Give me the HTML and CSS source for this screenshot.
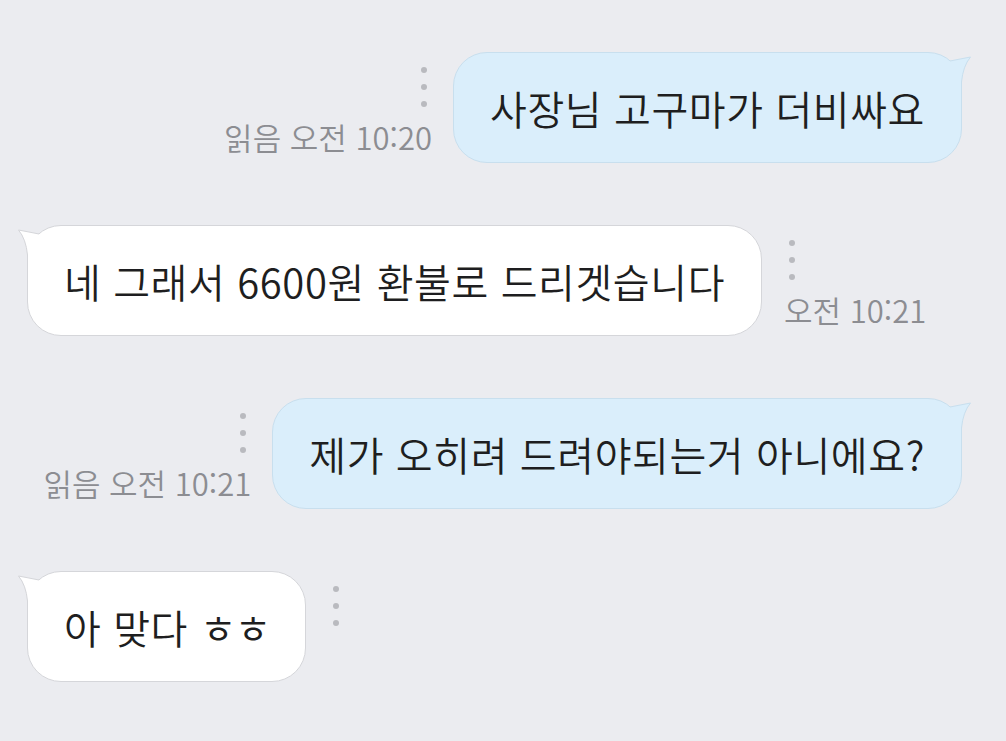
FILE: index.html
```html
<!DOCTYPE html>
<html lang="ko">
<head>
<meta charset="utf-8">
<link rel="stylesheet" href="styles.css">
</head>
<body>
<div class="chat">
  <div class="row row-me">
    <div class="meta">
      <div class="dots"><span></span><span></span><span></span></div>
      <div class="time">읽음 오전 10:20</div>
    </div>
    <div class="bubble bubble-me">
      <svg class="tail tail-right" viewBox="0 0 50 40" width="50" height="40"><path class="tail-fill" d="M28 9 Q38 7 48.5 5 Q41 14 39.5 30 L39.5 40 L10 40 L10 20 Z"/><path class="tail-line" d="M28 9 Q38 7 48.5 5 Q41 14 39.5 30 L39.5 40"/></svg>
      <span class="text">사장님 고구마가 더비싸요</span>
    </div>
  </div>

  <div class="row row-you">
    <div class="bubble bubble-you">
      <svg class="tail tail-left" viewBox="0 0 50 40" width="50" height="40"><path class="tail-fill" d="M22 9 Q12 7 1.5 5 Q9 14 10.5 30 L10.5 40 L40 40 L40 20 Z"/><path class="tail-line" d="M22 9 Q12 7 1.5 5 Q9 14 10.5 30 L10.5 40"/></svg>
      <span class="text">네 그래서 6600원 환불로 드리겟습니다</span>
    </div>
    <div class="meta">
      <div class="dots"><span></span><span></span><span></span></div>
      <div class="time">오전 10:21</div>
    </div>
  </div>

  <div class="row row-me">
    <div class="meta">
      <div class="dots"><span></span><span></span><span></span></div>
      <div class="time">읽음 오전 10:21</div>
    </div>
    <div class="bubble bubble-me">
      <svg class="tail tail-right" viewBox="0 0 50 40" width="50" height="40"><path class="tail-fill" d="M28 9 Q38 7 48.5 5 Q41 14 39.5 30 L39.5 40 L10 40 L10 20 Z"/><path class="tail-line" d="M28 9 Q38 7 48.5 5 Q41 14 39.5 30 L39.5 40"/></svg>
      <span class="text">제가 오히려 드려야되는거 아니에요?</span>
    </div>
  </div>

  <div class="row row-you">
    <div class="bubble bubble-you">
      <svg class="tail tail-left" viewBox="0 0 50 40" width="50" height="40"><path class="tail-fill" d="M22 9 Q12 7 1.5 5 Q9 14 10.5 30 L10.5 40 L40 40 L40 20 Z"/><path class="tail-line" d="M22 9 Q12 7 1.5 5 Q9 14 10.5 30 L10.5 40"/></svg>
      <span class="text">아 맞다 <span class="jamo">ㅎㅎ</span></span>
    </div>
    <div class="meta">
      <div class="dots"><span></span><span></span><span></span></div>
    </div>
  </div>
</div>
</body>
</html>
```

FILE: styles.css
```css
html, body {
  margin: 0;
  padding: 0;
  background: #ebecf0;
}
body {
  width: 1006px;
  height: 741px;
  overflow: hidden;
  font-family: "Noto Sans CJK KR", "Noto Sans", sans-serif;
}
.chat {
  display: flex;
  flex-direction: column;
  gap: 62px;
  padding: 52px 44px 0 27px;
}
.row {
  display: flex;
  align-items: stretch;
}
.row-me {
  justify-content: flex-end;
}
.row-you {
  justify-content: flex-start;
}
.meta {
  display: flex;
  flex-direction: column;
  justify-content: space-between;
  padding: 15px 0 10px;
}
.row-me .meta {
  align-items: flex-end;
  margin-right: 21px;
}
.row-you .meta {
  align-items: flex-start;
  margin-left: 22px;
}
.dots {
  display: flex;
  flex-direction: column;
  gap: 11px;
}
.row-me .dots { margin-right: 5px; }
.row-you .dots { margin-left: 5px; }
.dots span {
  display: block;
  width: 6px;
  height: 6px;
  border-radius: 50%;
  background: #b9babf;
}
.time {
  font-size: 31px;
  font-weight: 350;
  line-height: 32px;
  color: #8c8d92;
  white-space: nowrap;
}
.bubble {
  position: relative;
  box-sizing: border-box;
  height: 111px;
  display: flex;
  align-items: center;
  padding: 0 36px;
  border-radius: 34px;
  font-size: 40px;
  font-weight: 350;
  letter-spacing: 0.6px;
  color: #1e1e20;
  white-space: nowrap;
}
.bubble-me {
  background: #daeefb;
  border: 1px solid #c8dfee;
}
.bubble-you {
  background: #ffffff;
  border: 1px solid #d5d6da;
}
.text {
  position: relative;
  z-index: 1;
}
.jamo {
  letter-spacing: -2px;
}
.tail {
  position: absolute;
  top: -1px;
  overflow: visible;
}
.tail-right { right: -11px; }
.tail-left { left: -11px; }
.bubble-me .tail-fill { fill: #daeefb; }
.bubble-me .tail-line { fill: none; stroke: #c8dfee; stroke-width: 1; }
.bubble-you .tail-fill { fill: #ffffff; }
.bubble-you .tail-line { fill: none; stroke: #d5d6da; stroke-width: 1; }
```
